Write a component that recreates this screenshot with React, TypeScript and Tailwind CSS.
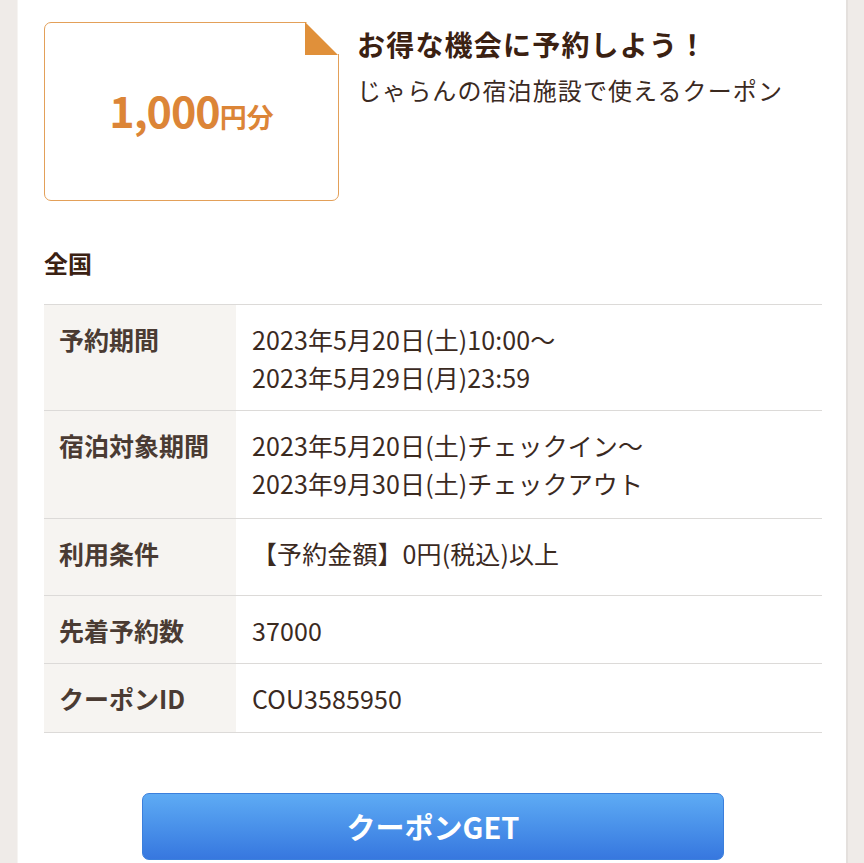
import React from "react";

const rows: { label: string; values: string[]; pb: string }[] = [
  { label: "予約期間", values: ["2023年5月20日(土)10:00～", "2023年5月29日(月)23:59"], pb: "pb-[14px]" },
  { label: "宿泊対象期間", values: ["2023年5月20日(土)チェックイン～", "2023年9月30日(土)チェックアウト"], pb: "pb-[16px]" },
  { label: "利用条件", values: ["【予約金額】0円(税込)以上"], pb: "pb-[23px]" },
  { label: "先着予約数", values: ["37000"], pb: "pb-[14px]" },
  { label: "クーポンID", values: ["COU3585950"], pb: "pb-[15px]" },
];

export default function App() {
  return (
    <div
      className="flex min-h-[863px] w-[864px] overflow-hidden"
      style={{ fontFamily: '"Noto Sans CJK JP", "Noto Sans", sans-serif' }}
    >
      <div className="w-[18px] shrink-0 bg-[#efebe8] border-r border-[#f6f4f2]" />
      <main className="flex-1 bg-white pl-[26px] pr-[24px] pt-[22px]">
        <div className="flex">
          <div className="relative h-[179px] w-[295px] shrink-0 rounded-[7px] border border-[#e3a059] flex items-center justify-center">
            <svg
              className="absolute -right-px -top-px"
              width="34"
              height="34"
              viewBox="0 0 34 34"
            >
              <rect x="0" y="0" width="34" height="34" fill="#ffffff" />
              <rect x="0" y="0" width="1.5" height="1" fill="#e3a059" />
              <polygon points="0,0 0,33 33,33" fill="#e0903a" />
              <rect x="33" y="32" width="1" height="2" fill="#e3a059" />
            </svg>
            <div className="flex items-baseline font-bold text-[#dc8537] leading-none -mt-[4px]">
              <span className="text-[43px] tracking-[-1px]">1,000</span>
              <span className="text-[27px]">円分</span>
            </div>
          </div>
          <div className="ml-[18px] pt-[2px]">
            <h1 className="text-[28px] font-bold leading-[40px] text-[#3b2112] tracking-[1.2px]">
              お得な機会に予約しよう！
            </h1>
            <p className="mt-[8px] text-[24px] leading-[36px] text-[#3b2a1f] tracking-[1.1px]">
              じゃらんの宿泊施設で使えるクーポン
            </p>
          </div>
        </div>

        <h2 className="mt-[44px] text-[24px] font-bold leading-[36px] text-[#3b2112]">全国</h2>

        <div className="mt-[23px] border-t border-[#dcdad8]">
          {rows.map((r) => (
            <div key={r.label} className="flex border-b border-[#dcdad8]">
              <div className="w-[192px] shrink-0 bg-[#f6f4f1] pl-[15px] pt-[15px] text-[25px] font-bold leading-[38px] text-[#4a3b33]">
                {r.label}
              </div>
              <div
                className={
                  "flex-1 pl-[16px] pt-[15px] text-[25px] leading-[38px] tracking-[0.1px] text-[#3b2a1f] " +
                  r.pb
                }
              >
                {r.values.map((v) => (
                  <div key={v}>{v}</div>
                ))}
              </div>
            </div>
          ))}
        </div>

        <div className="mt-[60px] flex justify-center">
          <button className="flex h-[67px] w-[582px] items-center justify-center rounded-[7px] border border-[#3b7fdc] bg-gradient-to-b from-[#5eabf4] to-[#3777df] text-[29px] font-bold text-white">
            クーポンGET
          </button>
        </div>
      </main>
      <div className="w-[18px] shrink-0 bg-[#efebe8] border-l-2 border-[#e4e0dd]" />
    </div>
  );
}
